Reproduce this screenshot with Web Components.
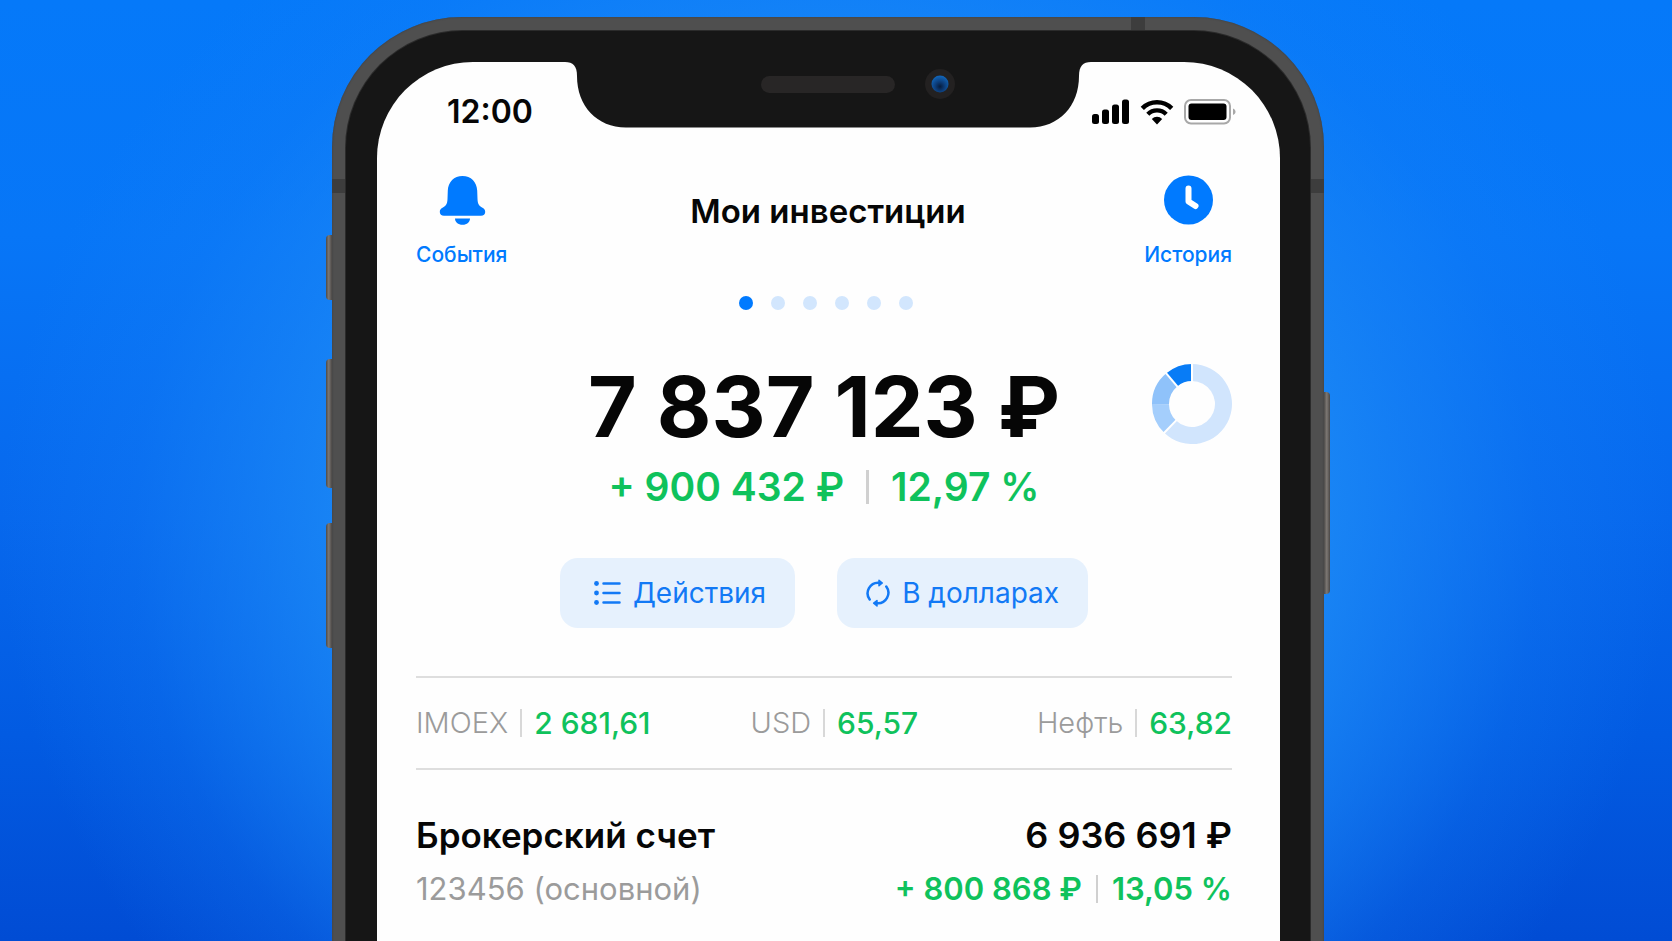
<!DOCTYPE html>
<html lang="ru">
<head>
<meta charset="utf-8">
<meta name="viewport" content="width=device-width, initial-scale=1">
<title>Мои инвестиции</title>
<style>
  :root {
    --blue: #007aff;
    --blue-soft: #d2e6fd;
    --green: #0fc25c;
    --gray: #9b9b9b;
    --line: #dedede;
    --ink: #060606;
  }
  body {
    margin: 0;
    min-height: 100vh;
    font-family: Inter, "Liberation Sans", sans-serif;
    color: var(--ink);
    background: #0467ee;
  }
</style>
</head>
<body>
<promo-stage>
  <phone-frame>
    <status-bar slot="status">12:00</status-bar>
    <screen-header>
      <icon-action slot="start" icon="bell">События</icon-action>
      Мои инвестиции
      <icon-action slot="end" icon="clock">История</icon-action>
    </screen-header>
    <page-dots count="6" current="1"></page-dots>
    <balance-summary>
      7 837 123 ₽
      <gain-line slot="gain" size="large">+ 900 432 ₽<span slot="percent">12,97 %</span></gain-line>
      <donut-chart slot="chart"></donut-chart>
    </balance-summary>
    <action-bar>
      <pill-button icon="list">Действия</pill-button>
      <pill-button icon="swap">В долларах</pill-button>
    </action-bar>
    <ticker-strip>
      <ticker-item>IMOEX<span slot="value">2 681,61</span></ticker-item>
      <ticker-item>USD<span slot="value">65,57</span></ticker-item>
      <ticker-item>Нефть<span slot="value">63,82</span></ticker-item>
    </ticker-strip>
    <account-row>
      <span slot="name">Брокерский счет</span>
      <span slot="amount">6 936 691 ₽</span>
      <span slot="number">123456 (основной)</span>
      <gain-line slot="gain">+ 800 868 ₽<span slot="percent">13,05 %</span></gain-line>
    </account-row>
  </phone-frame>
</promo-stage>

<script>
function component(name, html, setup) {
  const template = document.createElement('template');
  template.innerHTML = html;
  customElements.define(name, class extends HTMLElement {
    constructor() {
      super();
      this.attachShadow({ mode: 'open' }).append(template.content.cloneNode(true));
    }
    connectedCallback() {
      if (setup) setup(this, this.shadowRoot);
    }
  });
}

const ICONS = {
  bell: `<svg width="50" height="50" viewBox="0 0 50 50" fill="currentColor">
      <path d="M25.500 1C17 1 11.100 7 10.800 15.500L10.500 24C10.300 29 9 31 5.500 32.800C3.700 33.700 2.800 35 2.800 37C2.800 39.400 4.400 40.800 7 40.800H44C46.600 40.800 48.200 39.400 48.200 37C48.200 35 47.300 33.700 45.500 32.800C42 31 40.700 29 40.500 24L40.200 15.500C39.900 7 34 1 25.500 1Z"/>
      <path d="M18 43.500H33C33 47 30 49.800 25.500 49.800S18 47 18 43.500Z"/></svg>`,
  clock: `<svg width="50" height="50" viewBox="0 0 50 50"><circle cx="25.500" cy="25" r="24.500" fill="currentColor"/>
      <path d="M25.500 13.500V26.500L32.500 31" fill="none" stroke="#fff" stroke-width="6" stroke-linecap="round" stroke-linejoin="round"/></svg>`,
  list: `<svg width="32" height="26" viewBox="-5 0 32 26"><g fill="currentColor"><circle cx="2.500" cy="3.500" r="2.400"/><circle cx="2.500" cy="13" r="2.400"/><circle cx="2.500" cy="22.500" r="2.400"/></g>
      <path d="M9.500 3.500H25.500M9.500 13H25.500M9.500 22.500H25.500" stroke="currentColor" stroke-width="2.500" stroke-linecap="round"/></svg>`,
  swap: `<svg width="24" height="28" viewBox="0 0 24 28" fill="none" stroke="currentColor" stroke-width="2.500" stroke-linecap="round">
      <path d="M3.700 20.500A10.500 10.500 0 0 1 13 3.800"/><path d="M20.300 7.500A10.500 10.500 0 0 1 11 24.200"/>
      <path d="M13 1.300L16.300 4L13 6.700ZM11 21.500L7.700 24.200L11 27Z" fill="currentColor" stroke-width="1.500" stroke-linejoin="round"/></svg>`
};

component('promo-stage', `
  <style>
    :host {
      display: flex; justify-content: center; box-sizing: border-box;
      height: 100vh; overflow: hidden; padding: 17px 16px 0 0;
      background:
        radial-gradient(ellipse 50% 80% at 50% 56%, rgba(28,138,246,.95) 0, rgba(28,138,246,.9) 56%, rgba(26,134,246,.6) 70%, rgba(22,128,246,.26) 84%, rgba(18,120,246,0) 100%),
        linear-gradient(180deg, #0579f9 0, #0776f7 25%, #0768ed 55%, #025be2 78%, #014cd4 100%);
    }
  </style>
  <slot></slot>`);

component('phone-frame', `
  <style>
    :host { display: block; position: relative; width: 100%; max-width: 992px; min-width: 0; }
    .frame {
      box-sizing: border-box; min-height: 1200px; padding: 14px 14px 0;
      border-radius: 130px 130px 0 0; background: #4f4f4f;
      box-shadow: inset 0 0 2px #3a3a3a;
    }
    .bezel {
      box-sizing: border-box; min-height: 1200px; padding: 31px 30px 0 31px;
      border-radius: 117px 117px 0 0; background: #161616;
      box-shadow: 0 0 0 1px #2b2b2b;
    }
    .screen {
      position: relative; min-height: 1200px; border-radius: 96px 96px 0 0;
      background: #fefefe;
    }
    .content { padding: 45px 48px 0 39px; }
    .notch { position: absolute; top: 0; left: 50%; margin-left: -264px; }
    .key, .band { position: absolute; }
    .key { width: 6px; background: linear-gradient(90deg, #4c4a48, #7d7874 45%, #4a4745); }
    .left { left: -6px; border-radius: 4px 0 0 4px; }
    .right { right: -6px; border-radius: 0 4px 4px 0; }
    .mute { top: 218px; height: 65px; }
    .up { top: 342px; height: 129px; }
    .down { top: 506px; height: 125px; }
    .power { top: 375px; height: 202px; }
    .band { background: #3d3d3d; }
    .side { top: 162px; width: 13px; height: 14px; }
    .band-left { left: 0; } .band-right { right: 0; }
    .band-top { top: 0; right: 179px; width: 14px; height: 13px; }
  </style>
  <i class="key left mute"></i><i class="key left up"></i><i class="key left down"></i><i class="key right power"></i>
  <div class="frame"><div class="bezel"><div class="screen">
    <svg class="notch" width="526" height="66" viewBox="0 0 526 66" aria-hidden="true">
      <defs><radialGradient id="lens" cx="50%" cy="65%" r="60%"><stop offset="0" stop-color="#061c3c"/><stop offset=".45" stop-color="#0c3c78"/><stop offset="1" stop-color="#1162b4"/></radialGradient></defs>
      <path fill="#161616" d="M0 -1V0C8 0 12 4 12 14C12 44 32 65.500 61 65.500H465C494 65.500 514 44 514 14C514 4 518 0 526 0V-1Z"/>
      <rect x="196" y="14" width="134" height="17" rx="8.500" fill="#282626"/>
      <circle cx="375" cy="22" r="15" fill="#232121"/><circle cx="375" cy="22" r="8.500" fill="url(#lens)"/>
    </svg>
    <slot name="status"></slot>
    <div class="content"><slot></slot></div>
  </div></div></div>
  <i class="band side band-left"></i><i class="band side band-right"></i><i class="band band-top"></i>`);

component('status-bar', `
  <style>
    :host { display: flex; justify-content: space-between; align-items: center; height: 36px; padding: 32px 44px 0 70px; font-size: 32px; line-height: 36px; font-weight: 600; }
    .signs { display: flex; align-items: center; gap: 10px; }
    svg { display: block; }
  </style>
  <slot></slot>
  <div class="signs" aria-hidden="true">
    <svg width="38" height="26" viewBox="0 0 38 26"><rect x="0" y="15" width="7" height="10" rx="2.500"/><rect x="10" y="10.500" width="7" height="14.500" rx="2.500"/><rect x="20" y="5.500" width="7" height="19.500" rx="2.500"/><rect x="30" y="0.500" width="7" height="24.500" rx="2.500"/></svg>
    <svg width="34" height="26" viewBox="0 0 34 26" fill="none" stroke="#000"><path d="M2.300 9.300A20.800 20.800 0 0 1 31.700 9.300" stroke-width="4.600"/><path d="M7.800 15.200A13 13 0 0 1 26.200 15.200" stroke-width="4.400"/><path d="M17 25.500L11.800 20A7.300 7.300 0 0 1 22.200 20Z" fill="#000" stroke="none"/></svg>
    <svg width="52" height="26" viewBox="0 0 52 26"><rect x="1" y="1" width="45" height="23.500" rx="6" fill="none" stroke="#a8a8a8" stroke-width="2"/><rect x="4.500" y="4.500" width="38" height="16.500" rx="3" fill="#000"/><path d="M49 9.500C51 10.500 51.500 11.500 51.500 12.800S51 15 49 16Z" fill="#a8a8a8"/></svg>
  </div>`);

component('screen-header', `
  <style>
    :host { display: grid; grid-template-columns: 1fr auto 1fr; align-items: start; }
    h1 { margin: 0; padding: 16px 0 0 8px; font-size: 33px; line-height: 40px; font-weight: 600; text-align: center; }
    .start { justify-self: start; } .end { justify-self: end; }
  </style>
  <div class="start"><slot name="start"></slot></div>
  <h1><slot></slot></h1>
  <div class="end"><slot name="end"></slot></div>`);

component('icon-action', `
  <style>
    :host { display: block; }
    button { display: flex; flex-direction: column; align-items: center; gap: 17px; margin: 0; padding: 0; border: 0; background: none; color: var(--blue); font: 500 21px/26px Inter, sans-serif; cursor: pointer; }
    svg { display: block; overflow: visible; }
  </style>
  <button type="button"><span class="icon"></span><span><slot></slot></span></button>`,
  (host, root) => { root.querySelector('.icon').innerHTML = ICONS[host.getAttribute('icon')]; });

component('page-dots', `
  <style>
    :host { display: flex; justify-content: center; gap: 18px; padding: 28px 0 0 4px; }
    i { width: 14px; height: 14px; border-radius: 50%; background: var(--blue-soft); }
    .on { background: var(--blue); }
  </style>`,
  (host, root) => {
    for (let n = 1; n <= +host.getAttribute('count'); n++) {
      const dot = document.createElement('i');
      if (n === +host.getAttribute('current')) dot.className = 'on';
      root.append(dot);
    }
  });

component('balance-summary', `
  <style>
    :host { display: grid; grid-template-columns: 80px 1fr 80px; padding-top: 48px; }
    .total { grid-column: 2; display: flex; flex-direction: column; align-items: center; gap: 8px; padding-top: 1px; }
    .sum { font-size: 84px; line-height: 96px; font-weight: 700; white-space: nowrap; }
    .chart { padding-top: 6px; }
  </style>
  <div class="total"><div class="sum"><slot></slot></div><slot name="gain"></slot></div>
  <div class="chart"><slot name="chart"></slot></div>`);

component('gain-line', `
  <style>
    :host { display: flex; align-items: center; gap: 14px; font-size: 31px; line-height: 40px; font-weight: 600; color: var(--green); white-space: nowrap; }
    :host([size="large"]) { font-size: 39px; line-height: 48px; gap: 22px; }
    i { width: 2px; height: 28px; background: #d0d0d0; }
    :host([size="large"]) i { width: 3px; height: 34px; }
  </style>
  <span><slot></slot></span><i></i><slot name="percent"></slot>`);

component('donut-chart', `
  <style>:host { display: block; } svg { display: block; }</style>
  <svg width="80" height="80" viewBox="-40 -40 80 80" role="img" aria-label="Структура портфеля"></svg>`,
  (host, root) => {
    const point = (deg, r) => [Math.sin(deg * Math.PI / 180) * r, -Math.cos(deg * Math.PI / 180) * r].join(' ');
    const slices = [[0, 224, '#d1e5fd'], [224, 269, '#a4cefc'], [269, 320, '#8fc2fa'], [320, 360, '#087cf6']];
    root.querySelector('svg').innerHTML = slices.map(([a, b, fill]) =>
      `<path fill="${fill}" d="M${point(a, 40)}A40 40 0 ${b - a > 180 ? 1 : 0} 1 ${point(b, 40)}L${point(b, 23)}A23 23 0 ${b - a > 180 ? 1 : 0} 0 ${point(a, 23)}Z"/>`).join('') +
      [0, 224, 320].map(a => `<path stroke="#fff" stroke-width="2" d="M${point(a, 22)}L${point(a, 41)}"/>`).join('');
  });

component('action-bar', `
  <style>:host { display: flex; justify-content: center; gap: 42px; padding-top: 47px; }</style>
  <slot></slot>`);

component('pill-button', `
  <style>
    :host { display: block; }
    button { display: flex; align-items: center; gap: 12px; height: 70px; margin: 0; padding: 0 29px; border: 0; border-radius: 18px; background: #e6f1fd; color: #1279f5; font: 400 28px/34px Inter, sans-serif; cursor: pointer; }
    svg { display: block; }
  </style>
  <button type="button"><span class="icon"></span><span><slot></slot></span></button>`,
  (host, root) => { root.querySelector('.icon').innerHTML = ICONS[host.getAttribute('icon')]; });

component('ticker-strip', `
  <style>
    :host { display: grid; grid-template-columns: 41% 1fr auto; align-items: center; margin-top: 48px; height: 90px; border-top: 2px solid var(--line); border-bottom: 2px solid var(--line); }
  </style>
  <slot></slot>`);

component('ticker-item', `
  <style>
    :host { display: flex; align-items: center; gap: 12px; line-height: 36px; white-space: nowrap; }
    .name { color: var(--gray); font-size: 29px; font-weight: 300; }
    .value { color: var(--green); font-size: 30px; font-weight: 500; }
    i { width: 2px; height: 28px; background: #d8d8d8; }
  </style>
  <span class="name"><slot></slot></span><i></i><span class="value"><slot name="value"></slot></span>`);

component('account-row', `
  <style>
    :host { display: grid; gap: 12px; padding-top: 43px; }
    div { display: flex; justify-content: space-between; align-items: center; white-space: nowrap; }
    .main { font-size: 36px; line-height: 44px; font-weight: 600; }
    .name { font-size: 35px; }
    .sub { font-size: 31px; line-height: 40px; color: var(--gray); }
  </style>
  <div class="main"><span class="name"><slot name="name"></slot></span><slot name="amount"></slot></div>
  <div class="sub"><slot name="number"></slot><slot name="gain"></slot></div>`);
</script>
</body>
</html>
